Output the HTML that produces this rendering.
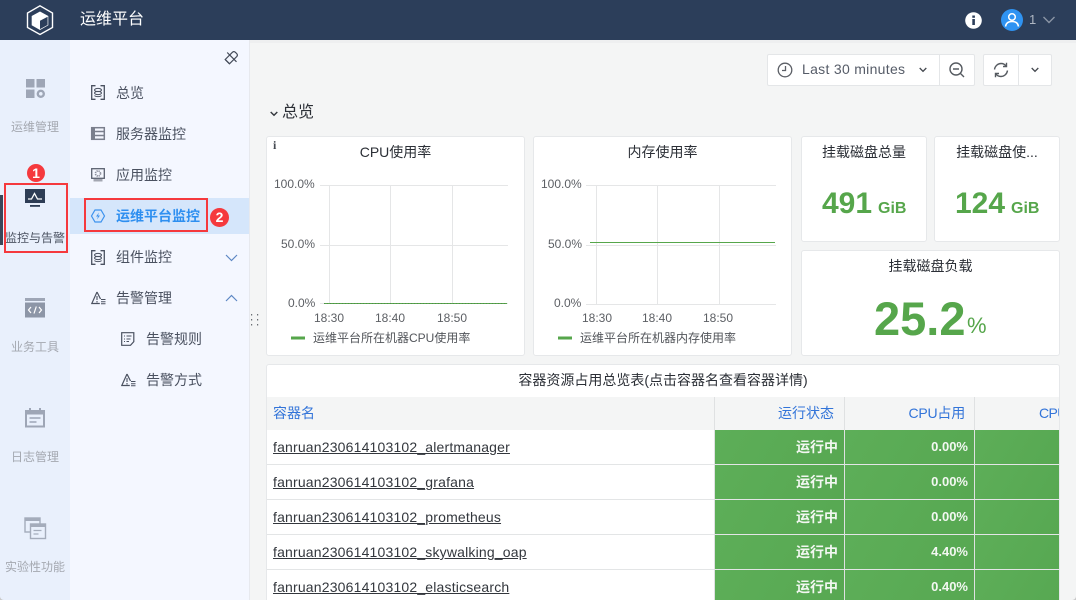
<!DOCTYPE html>
<html lang="zh">
<head>
<meta charset="utf-8">
<title>运维平台</title>
<style>
*{box-sizing:border-box}
html,body{margin:0;padding:0;width:1076px;height:600px;overflow:hidden}
body{position:relative;background:#f4f5f5;font-family:"Liberation Sans","Noto Sans CJK SC",sans-serif;color:#333}
.a{position:absolute;white-space:nowrap}
svg{position:absolute;overflow:visible}
.hdr{left:0;top:0;width:1076px;height:40px;background:#2c3e5a}
.s1{left:0;top:40px;width:70px;height:560px;background:#e9f0fc}
.s2{left:70px;top:40px;width:180px;height:560px;background:#f4f7ff}
.nl{font-size:12px;color:#a4a8b0;width:70px;text-align:center;left:0;line-height:16px}
.m{font-size:14px;color:#4a5160;line-height:20px}
.p{background:#fff;border:1px solid #e6e8ea;border-radius:3px}
.t{font-size:14px;color:#2b2f36;line-height:18px;text-align:center}
.ax{font-size:12px;color:#5c5f64;line-height:14px}
.lg{font-size:12px;color:#52555a;line-height:14px}
.g{font-weight:bold;color:#56a64b}
.b{background:#fff;border:1px solid #e4e6e8}
.row{left:267px;width:792px;height:35px;background:#fff;border-bottom:1px solid #e3e5e6}
.nm{left:273px;font-size:14px;color:#33373d;text-decoration:underline;line-height:18px;letter-spacing:.18px}
.c{background:linear-gradient(120deg,#5dae58,#57a852);height:34px}
.w{color:#f2f7f1;font-size:13px;font-weight:bold;line-height:18px;text-align:right}
.z{font-size:14px}
.h{color:#3274d9;font-size:14px;line-height:18px}
</style>
</head>
<body>
<div class="a hdr"></div>
<svg style="left:26px;top:5px" width="28" height="30" viewBox="0 0 28 30" fill="none">
<path d="M14 .8 26.500 8v14.500L14 29.500 1.500 22.500V8z" stroke="#fff" stroke-width="1.400"/>
<path d="M14 6.500l8.300 4.500v9.300L14 25 5.700 20.300V11z" fill="#fff"/>
<path d="M14 15.800l7.600-4v8.200L14 24.100z" fill="#2c3e5a"/>
</svg>
<div class="a" style="left:80px;top:10px;font-size:16px;line-height:20px;color:#fff">运维平台</div>
<svg style="left:965px;top:12px" width="17" height="17" viewBox="0 0 17 17"><circle cx="8.500" cy="8.500" r="8.300" fill="#fff"/><rect x="7.300" y="7" width="2.600" height="6" fill="#2c3e5a"/><rect x="7.300" y="3.500" width="2.600" height="2.300" fill="#2c3e5a"/></svg>
<svg style="left:1001px;top:9px" width="22" height="22" viewBox="0 0 22 22" fill="none"><circle cx="11" cy="11" r="11" fill="#2f93f2"/><circle cx="11" cy="8" r="3.300" stroke="#fff" stroke-width="1.500"/><path d="M4.500 17.500c.5-3.500 3-5 6.500-5s6 1.500 6.500 5" stroke="#fff" stroke-width="1.500"/></svg>
<div class="a" style="left:1029px;top:12px;font-size:13px;line-height:16px;color:#aeb6c2">1</div>
<svg style="left:1042px;top:16px" width="14" height="8" viewBox="0 0 14 8" fill="none"><path d="M1.500 1l5.500 5.500L12.500 1" stroke="#8b95a5" stroke-width="1.400"/></svg>

<div class="a s1"></div>
<div class="a s2"></div>
<div class="a" style="left:249px;top:40px;width:1px;height:560px;background:#e7e9ee"></div>
<div class="a" style="left:250px;top:40px;width:826px;height:3px;background:#eeeff0"></div>
<div class="a" style="left:0;top:195px;width:3px;height:50px;background:#3a4658"></div>

<svg style="left:26px;top:79px" width="20" height="20" viewBox="0 0 20 20" fill="#9ea6b6"><rect width="8.500" height="8.500" x="0" y="0"/><rect width="8.500" height="8.500" x="10.500" y="0"/><rect width="8.500" height="8.500" x="0" y="10.500"/><circle cx="14.800" cy="14.800" r="3" fill="none" stroke="#9ea6b6" stroke-width="2.400"/></svg>
<div class="a nl" style="top:119px">运维管理</div>

<svg style="left:25px;top:189px" width="20" height="18" viewBox="0 0 20 18"><rect width="20" height="14" fill="#2e3d55"/><path d="M3 10h3.500L9.500 4.500l3 5.500H17" fill="none" stroke="#fff" stroke-width="1.300"/><rect x="5" y="16" width="10" height="1.800" fill="#2e3d55"/></svg>
<div class="a nl" style="top:230px;color:#4c5362">监控与告警</div>

<svg style="left:25px;top:298px" width="20" height="20" viewBox="0 0 20 20"><rect y="0" width="20" height="3" fill="#9ea6b6"/><rect y="4.500" width="20" height="15" fill="#8d96a7"/><path d="M6 9l-2.500 3L6 15M14 9l2.500 3L14 15M11.300 8.500l-2.300 7" stroke="#fff" stroke-width="1.200" fill="none"/></svg>
<div class="a nl" style="top:339px">业务工具</div>

<svg style="left:25px;top:408px" width="20" height="20" viewBox="0 0 20 20" fill="none"><rect x="1" y="3" width="18" height="15.500" stroke="#9ea6b6" stroke-width="2"/><rect x="1" y="3" width="18" height="3.500" fill="#9ea6b6"/><path d="M5 0v3M15 0v3" stroke="#9ea6b6" stroke-width="2"/><path d="M4.500 10h11M4.500 14h7" stroke="#9ea6b6" stroke-width="1.500"/></svg>
<div class="a nl" style="top:449px">日志管理</div>

<svg style="left:24px;top:517px" width="23" height="23" viewBox="0 0 23 23" fill="none"><rect x="1" y="1" width="15" height="14" stroke="#a4acbb" stroke-width="1.400"/><rect x="1" y="1" width="15" height="3" fill="#a4acbb"/><rect x="6.500" y="7" width="15" height="14.500" fill="#e9f0fc" stroke="#a4acbb" stroke-width="1.400"/><rect x="6.500" y="7" width="15" height="3" fill="#a4acbb"/><path d="M9.500 13.500h8M9.500 17h5" stroke="#a4acbb" stroke-width="1.200"/></svg>
<div class="a nl" style="top:559px">实验性功能</div>

<svg style="left:224px;top:51px" width="14" height="14" viewBox="0 0 14 14" fill="none" stroke="#434a58" stroke-width="1.200"><path d="M1.200 8.500 8.500 1.200c1-.8 2.200-.6 3 .2l1.100 1.100c.8.800 1 2 .2 3L5.500 12.800z"/><path d="M3.200 1.500 12.500 10.800M1.200 8.500l4.300 4.300"/></svg>

<svg style="left:91px;top:85px" width="14" height="15" viewBox="0 0 14 15" fill="none" stroke="#4a5160"><path d="M4.500 .7H.7v13.600h3.800M9.500 .7h3.800v13.600H9.500" stroke-width="1.300"/><ellipse cx="7" cy="5" rx="3.500" ry="1.600"/><ellipse cx="7" cy="8" rx="3.500" ry="1.600"/><path d="M3.500 10.500c1 1.500 6 1.500 7 0"/></svg>
<div class="a m" style="left:116px;top:83px">总览</div>

<svg style="left:91px;top:127px" width="14" height="13" viewBox="0 0 14 13" fill="none" stroke="#7a7f8d" stroke-width="1.500"><rect x=".7" y=".7" width="12.600" height="11.600"/><path d="M.7 4.500h12.600M.7 8.500h12.600"/><path d="M2.500 .7v11.600" stroke-width="3"/></svg>
<div class="a m" style="left:116px;top:124px">服务器监控</div>

<svg style="left:91px;top:168px" width="14" height="14" viewBox="0 0 14 14" fill="none"><rect x=".7" y=".7" width="12.600" height="9.600" stroke="#5a6070" stroke-width="1.300"/><circle cx="7" cy="5.500" r="2.500" stroke="#8b8f9c" stroke-width="1.700" stroke-dasharray="1.200 .8"/><rect x="2.500" y="11" width="9" height="2.500" fill="#a3a7b2"/></svg>
<div class="a m" style="left:116px;top:165px">应用监控</div>

<div class="a" style="left:70px;top:198px;width:179px;height:36px;background:#d5e6fb"></div>
<svg style="left:91px;top:209px" width="14" height="14" viewBox="0 0 14 14" fill="none"><path d="M4 1h6l3.500 6L10 13H4L.5 7z" stroke="#3d92ee" stroke-width="1.200"/><path d="M8 3.500 5 7.500h2L6 10.500l3-4H7z" fill="#3d92ee"/></svg>
<div class="a m" style="left:116px;top:206px;color:#2e8ff0;font-weight:bold">运维平台监控</div>

<svg style="left:91px;top:250px" width="14" height="15" viewBox="0 0 14 15" fill="none" stroke="#4a5160"><path d="M4.500 .7H.7v13.600h3.800M9.500 .7h3.800v13.600H9.500" stroke-width="1.300"/><ellipse cx="7" cy="5" rx="3.500" ry="1.600"/><ellipse cx="7" cy="8" rx="3.500" ry="1.600"/><path d="M3.500 10.500c1 1.500 6 1.500 7 0"/></svg>
<div class="a m" style="left:116px;top:247px">组件监控</div>
<svg style="left:225px;top:254px" width="13" height="8" viewBox="0 0 13 8" fill="none"><path d="M1 1l5.500 5.500L12 1" stroke="#5d87c4" stroke-width="1.200"/></svg>

<svg style="left:91px;top:291px" width="15" height="14" viewBox="0 0 15 14" fill="none"><path d="M6 1 .8 12.500h8" stroke="#4a5160" stroke-width="1.200"/><path d="M6 1l3.500 7" stroke="#4a5160" stroke-width="1.200"/><path d="M6 5v4M6 10v1.500" stroke="#4a5160" stroke-width="1.100"/><path d="M10 8.500h4.500M10 10.700h4.500M10 12.800h4.500" stroke="#4a5160"/></svg>
<div class="a m" style="left:116px;top:288px">告警管理</div>
<svg style="left:225px;top:294px" width="13" height="8" viewBox="0 0 13 8" fill="none"><path d="M1 7l5.500-5.500L12 7" stroke="#5d87c4" stroke-width="1.200"/></svg>

<svg style="left:121px;top:332px" width="14" height="14" viewBox="0 0 14 14" fill="none" stroke="#4a5160"><path d="M.7 .7h12.100v9L9.500 13.300H.7z" stroke-width="1.200"/><path d="M3 4h1M3 7h1M3 9.500h1M5.500 4h5M5.500 7h4M5.500 9.500h2.500"/></svg>
<div class="a m" style="left:146px;top:329px">告警规则</div>
<svg style="left:121px;top:373px" width="15" height="14" viewBox="0 0 15 14" fill="none"><path d="M6 1 .8 12.500h8" stroke="#4a5160" stroke-width="1.200"/><path d="M6 1l3.500 7" stroke="#4a5160" stroke-width="1.200"/><path d="M6 5v4M6 10v1.500" stroke="#4a5160" stroke-width="1.100"/><path d="M10 8.500h4.500M10 10.700h4.500M10 12.800h4.500" stroke="#4a5160"/></svg>
<div class="a m" style="left:146px;top:370px">告警方式</div>

<svg style="left:250px;top:314px" width="10" height="12" viewBox="0 0 10 12" fill="#6a6e74"><rect x="1" y="0" width="1.200" height="1.500"/><rect x="7" y="0" width="1.200" height="1.500"/><rect x="1" y="5" width="1.200" height="1.500"/><rect x="7" y="5" width="1.200" height="1.500"/><rect x="1" y="10" width="1.200" height="1.500"/><rect x="7" y="10" width="1.200" height="1.500"/></svg>

<!-- Toolbar -->
<div class="a b" style="left:767px;top:54px;width:173px;height:32px;border-radius:2px 0 0 2px"></div>
<div class="a b" style="left:939px;top:54px;width:36px;height:32px;border-radius:0 2px 2px 0"></div>
<div class="a b" style="left:983px;top:54px;width:36px;height:32px;border-radius:2px 0 0 2px"></div>
<div class="a b" style="left:1018px;top:54px;width:34px;height:32px;border-radius:0 2px 2px 0"></div>
<svg style="left:777px;top:62px" width="16" height="16" viewBox="0 0 16 16" fill="none" stroke="#5c5f66" stroke-width="1.300"><circle cx="8" cy="8" r="6.800"/><path d="M8.500 4v4.500H5"/></svg>
<div class="a" style="left:802px;top:61px;font-size:14px;line-height:16px;color:#565c68;letter-spacing:.3px">Last 30 minutes</div>
<svg style="left:919px;top:67px" width="8" height="6" viewBox="0 0 8 6" fill="none"><path d="M.7 1l3.300 3.300L7.300 1" stroke="#44484f" stroke-width="1.300"/></svg>
<svg style="left:949px;top:62px" width="16" height="16" viewBox="0 0 16 16" fill="none" stroke="#555a60" stroke-width="1.400"><circle cx="7" cy="7" r="6"/><path d="M4 7h6M11.500 11.500 15 15"/></svg>
<svg style="left:993px;top:62px" width="16" height="16" viewBox="0 0 16 16" fill="none" stroke="#555a60" stroke-width="1.400"><path d="M1.500 7.500C2 3.800 5 1.500 8 1.500c2.200 0 4 1 5 2.500M14.500 8.500c-.5 3.700-3.500 6-6.500 6-2.200 0-4-1-5-2.500"/><path d="M13.500 .8v3.700H10M2.500 15.200v-3.700H6"/></svg>
<svg style="left:1031px;top:67px" width="8" height="6" viewBox="0 0 8 6" fill="none"><path d="M.7 1l3.300 3.300L7.300 1" stroke="#44484f" stroke-width="1.300"/></svg>

<svg style="left:270px;top:111px" width="8" height="6" viewBox="0 0 8 6" fill="none"><path d="M.7 1l3.300 3.300L7.300 1" stroke="#33373d" stroke-width="1.400"/></svg>
<div class="a" style="left:282px;top:103px;font-size:16px;line-height:20px;color:#2b2f36">总览</div>

<!-- CPU panel -->
<div class="a p" style="left:266px;top:136px;width:259px;height:220px"></div>
<div class="a" style="left:273px;top:139px;font-family:'Liberation Serif',serif;font-weight:bold;font-size:12px;line-height:12px;color:#454a52">i</div>
<div class="a t" style="left:266px;top:143px;width:259px">CPU使用率</div>
<div class="a ax" style="left:274px;top:177px">100.0%</div>
<div class="a ax" style="left:281px;top:237px">50.0%</div>
<div class="a ax" style="left:288px;top:296px">0.0%</div>
<div class="a ax" style="left:314px;top:311px">18:30</div>
<div class="a ax" style="left:375px;top:311px">18:40</div>
<div class="a ax" style="left:437px;top:311px">18:50</div>
<div class="a lg" style="left:313px;top:331px">运维平台所在机器CPU使用率</div>

<!-- Memory panel -->
<div class="a p" style="left:533px;top:136px;width:259px;height:220px"></div>
<div class="a t" style="left:533px;top:143px;width:259px">内存使用率</div>
<div class="a ax" style="left:541px;top:177px">100.0%</div>
<div class="a ax" style="left:548px;top:237px">50.0%</div>
<div class="a ax" style="left:554px;top:296px">0.0%</div>
<div class="a ax" style="left:582px;top:311px">18:30</div>
<div class="a ax" style="left:642px;top:311px">18:40</div>
<div class="a ax" style="left:703px;top:311px">18:50</div>
<div class="a lg" style="left:580px;top:331px">运维平台所在机器内存使用率</div>

<!-- Chart lines (above both panels) -->
<svg style="left:0;top:0" width="1076" height="600" fill="none">
<path d="M320 185.500h188M320 245.500h188M320 303.500h188M329.500 185v118M390.500 185v118M452.500 185v118" stroke="#e5e6e7"/>
<path d="M324 303.500h183" stroke="#56a64b"/>
<path d="M324 303.500h183" stroke="#444" stroke-dasharray="1 2" stroke-opacity=".3"/>
<path d="M291 338h14" stroke="#56a64b" stroke-width="3"/>
<path d="M586 185.500h190M586 245.500h190M586 304.500h190M596.500 185v119M657.500 185v119M719.500 185v119" stroke="#e5e6e7"/>
<path d="M590 242.500h185" stroke="#56a64b"/>
<path d="M558 338h14" stroke="#56a64b" stroke-width="3"/>
</svg>

<!-- Stats -->
<div class="a p" style="left:801px;top:136px;width:126px;height:106px"></div>
<div class="a t" style="left:801px;top:143px;width:126px">挂载磁盘总量</div>
<div class="a g" style="left:822px;top:185px;font-size:30px;line-height:38px">491</div>
<div class="a g" style="left:878px;top:198px;font-size:16px;line-height:22px">GiB</div>
<div class="a p" style="left:934px;top:136px;width:126px;height:106px"></div>
<div class="a t" style="left:934px;top:143px;width:126px">挂载磁盘使...</div>
<div class="a g" style="left:955px;top:185px;font-size:30px;line-height:38px">124</div>
<div class="a g" style="left:1011px;top:198px;font-size:16px;line-height:22px">GiB</div>
<div class="a p" style="left:801px;top:250px;width:259px;height:106px"></div>
<div class="a t" style="left:801px;top:257px;width:259px">挂载磁盘负载</div>
<div class="a g" style="left:874px;top:289px;font-size:47px;line-height:60px">25.2</div>
<div class="a g" style="left:967px;top:311px;font-size:22px;line-height:30px;font-weight:normal">%</div>

<!-- Table -->
<div class="a p" style="left:266px;top:364px;width:794px;height:250px"></div>
<div class="a t" style="left:267px;top:371px;width:792px">容器资源占用总览表(点击容器名查看容器详情)</div>
<div class="a" style="left:267px;top:397px;width:792px;height:33px;background:#f4f5f5"></div>
<div class="a h" style="left:273px;top:404px">容器名</div>
<div class="a h" style="left:715px;top:404px;width:119px;text-align:right">运行状态</div>
<div class="a h" style="left:845px;top:404px;width:120px;text-align:right;letter-spacing:-.2px">CPU占用</div>
<div class="a" style="left:975px;top:397px;width:84px;height:33px;overflow:hidden"><div class="a h" style="left:64px;top:7px;letter-spacing:-.6px">CPU内存</div></div>

<div class="a row" style="top:430px"></div>
<div class="a row" style="top:465px"></div>
<div class="a row" style="top:500px"></div>
<div class="a row" style="top:535px"></div>
<div class="a row" style="top:570px;height:30px;border:none"></div>

<div class="a nm" style="top:438px">fanruan230614103102_alertmanager</div>
<div class="a nm" style="top:473px">fanruan230614103102_grafana</div>
<div class="a nm" style="top:508px">fanruan230614103102_prometheus</div>
<div class="a nm" style="top:543px">fanruan230614103102_skywalking_oap</div>
<div class="a nm" style="top:578px">fanruan230614103102_elasticsearch</div>

<div class="a c" style="left:715px;top:430px;width:129px"></div><div class="a c" style="left:845px;top:430px;width:129px"></div><div class="a c" style="left:975px;top:430px;width:84px"></div>
<div class="a c" style="left:715px;top:465px;width:129px"></div><div class="a c" style="left:845px;top:465px;width:129px"></div><div class="a c" style="left:975px;top:465px;width:84px"></div>
<div class="a c" style="left:715px;top:500px;width:129px"></div><div class="a c" style="left:845px;top:500px;width:129px"></div><div class="a c" style="left:975px;top:500px;width:84px"></div>
<div class="a c" style="left:715px;top:535px;width:129px"></div><div class="a c" style="left:845px;top:535px;width:129px"></div><div class="a c" style="left:975px;top:535px;width:84px"></div>
<div class="a c" style="left:715px;top:570px;width:129px;height:30px"></div><div class="a c" style="left:845px;top:570px;width:129px;height:30px"></div><div class="a c" style="left:975px;top:570px;width:84px;height:30px"></div>
<div class="a" style="left:714px;top:397px;width:1px;height:203px;background:#dfe1e2"></div>
<div class="a" style="left:844px;top:397px;width:1px;height:203px;background:#dfe1e2"></div>
<div class="a" style="left:974px;top:397px;width:1px;height:203px;background:#dfe1e2"></div>

<div class="a w z" style="left:715px;top:438px;width:123px">运行中</div><div class="a w" style="left:845px;top:438px;width:123px">0.00%</div>
<div class="a w z" style="left:715px;top:473px;width:123px">运行中</div><div class="a w" style="left:845px;top:473px;width:123px">0.00%</div>
<div class="a w z" style="left:715px;top:508px;width:123px">运行中</div><div class="a w" style="left:845px;top:508px;width:123px">0.00%</div>
<div class="a w z" style="left:715px;top:543px;width:123px">运行中</div><div class="a w" style="left:845px;top:543px;width:123px">4.40%</div>
<div class="a w z" style="left:715px;top:578px;width:123px">运行中</div><div class="a w" style="left:845px;top:578px;width:123px">0.40%</div>

<!-- Annotations -->
<div class="a" style="left:4px;top:183px;width:64px;height:70px;border:2px solid #f5393d"></div>
<div class="a" style="left:84px;top:198px;width:124px;height:34px;border:2px solid #f5393d"></div>
<div class="a" style="left:27px;top:164px;width:18px;height:18px;border-radius:50%;background:#f5393d;color:#fff;font-size:14px;font-weight:bold;line-height:18px;text-align:center">1</div>
<div class="a" style="left:210px;top:208px;width:19px;height:19px;border-radius:50%;background:#f5393d;color:#fff;font-size:14px;font-weight:bold;line-height:19px;text-align:center">2</div>

<!-- Window corners -->
<svg style="left:0;top:596px" width="4" height="4" viewBox="0 0 4 4" fill="none"><path d="M0 0c0 2 1.500 4 4 4H0z" fill="#c9c9c9"/></svg>
<svg style="left:1072px;top:596px" width="4" height="4" viewBox="0 0 4 4" fill="none"><path d="M4 0c0 2-1.500 4-4 4h4z" fill="#c9c9c9"/></svg>
</body>
</html>
